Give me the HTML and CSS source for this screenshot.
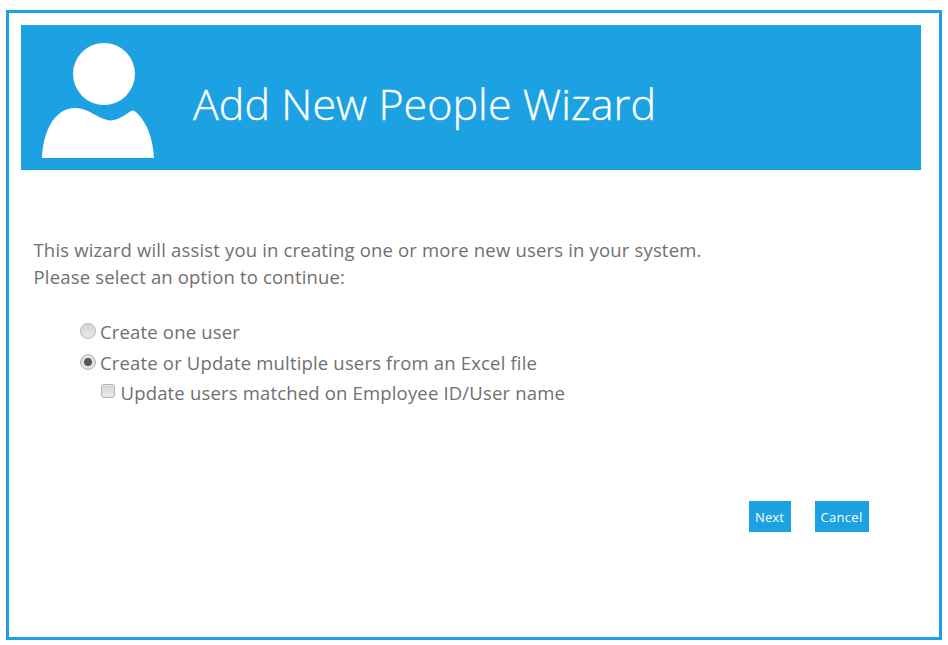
FILE: index.html
```html
<!DOCTYPE html>
<html lang="en">
<head>
<meta charset="utf-8">
<title>Add New People Wizard</title>
<link rel="stylesheet" href="styles.css">
</head>
<body>
<main class="frame">
  <header class="banner">
    <svg class="avatar" width="114" height="118" viewBox="0 0 114 118" aria-hidden="true">
      <circle cx="63" cy="32" r="31" fill="#fff"/>
      <path d="M1 116C2 92 11 72 27 67C34 65 40 66 47 69C55 73 63 78.500 70 78.500C78 78 85 72 90 69C92 68 94 69 96 71C107 82 112 98 113 116Z" fill="#fff"/>
    </svg>
    <h1 class="title">Add New People Wizard</h1>
  </header>
  <section class="content">
    <p class="intro">This wizard will assist you in creating one or more new users in your system.<br>Please select an option to continue:</p>
    <div class="options">
      <label class="option"><input type="radio" name="mode" class="radio"><span>Create one user</span></label>
      <label class="option"><input type="radio" name="mode" class="radio" checked><span>Create or Update multiple users from an Excel file</span></label>
      <label class="option sub"><input type="checkbox" class="check"><span>Update users matched on Employee ID/User name</span></label>
    </div>
    <div class="actions">
      <button class="btn" type="button">Next</button>
      <button class="btn" type="button">Cancel</button>
    </div>
  </section>
</main>
</body>
</html>
```
FILE: styles.css
```css
* { box-sizing: border-box; }
html, body { margin: 0; height: 100%; background: #fff; }
body { padding: 10px 6px 5px 6px; font-family: "Open Sans", "Noto Sans", sans-serif; color: #726f6f; }
.frame { height: 630px; width: 936px; border: 3px solid #1ca1e2; padding: 12px 18px 0 12px; }
.banner { height: 145px; background: #1ca1e2; display: flex; align-items: flex-start; padding: 17px 0 0 20px; }
.avatar { flex: none; }
.title { margin: 33px 0 0 38px; font-size: 43px; line-height: 58px; font-weight: 300; color: #fff; letter-spacing: 0.04px; -webkit-text-stroke: 0.35px #fff; white-space: nowrap; }
.content { padding: 66px 0 0 12.500px; }
.intro { margin: 0; font-size: 18.500px; line-height: 27px; letter-spacing: 0.17px; }
.options { margin-top: 26px; padding-left: 46px; display: flex; flex-direction: column; font-size: 18.500px; letter-spacing: 0.17px; }
.option { display: flex; align-items: center; height: 31px; }
.option.sub { height: 28px; padding-left: 21px; }
.radio, .check { appearance: none; margin: 0; flex: none; position: relative; top: -1px; border: 1px solid #b4b4b4; background: linear-gradient(#d2d2d2, #ececec); box-shadow: inset 0 0 0 1px #e2e2e2; }
.radio { width: 16px; height: 16px; margin-right: 4.500px; border-radius: 50%; }
.radio:checked { background: radial-gradient(circle, #565656 0 3.5px, #e0e0e0 4.5px); }
.check { width: 14px; height: 14px; margin-right: 6px; border-radius: 3px; }
.actions { margin-top: 95px; display: flex; justify-content: flex-end; gap: 24px; padding-right: 52px; }
.btn { height: 31px; width: 42px; padding: 1px 1px 0 0; border: 0; border-radius: 0; background: #1ca1e2; color: #fff; font: 13px "Open Sans", sans-serif; letter-spacing: 0.1px; }
.btn:last-child { width: 54px; letter-spacing: 0.3px; }
```
